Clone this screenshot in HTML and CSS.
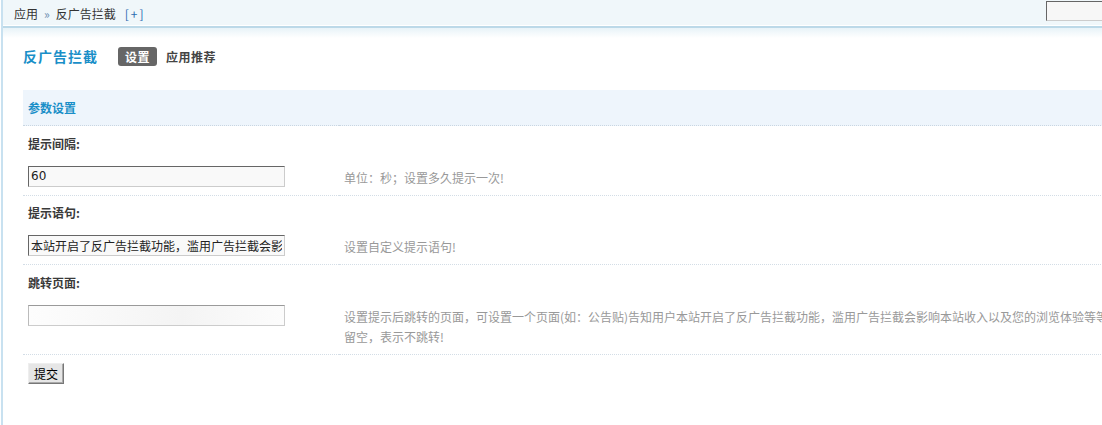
FILE: index.html
```html
<!DOCTYPE html>
<html lang="zh-CN">
<head>
<meta charset="utf-8">
<title>反广告拦截</title>
<link rel="stylesheet" href="styles.css">
</head>
<body>
<div class="frame">
  <div class="topbar">
    <div class="crumb">
      <span>应用</span><span class="sep">»</span><span>反广告拦截</span><a class="plus" href="#">[+]</a>
    </div>
    <input class="search" type="text">
  </div>
  <div class="shade"></div>
  <div class="content">
    <div class="titlebar">
      <h1 class="title">反广告拦截</h1>
      <span class="tab tab-on">设置</span>
      <span class="tab">应用推荐</span>
    </div>
    <table class="tb">
      <tr class="head"><th colspan="2">参数设置</th></tr>
      <tr class="lbl"><td colspan="2">提示间隔:</td></tr>
      <tr class="val">
        <td class="c1"><input class="txt" type="text" value="60"></td>
        <td class="tip">单位：秒；设置多久提示一次!</td>
      </tr>
      <tr class="lbl"><td colspan="2">提示语句:</td></tr>
      <tr class="val">
        <td class="c1"><input class="txt" type="text" value="本站开启了反广告拦截功能，滥用广告拦截会影响本站收入以及您的浏览体验"></td>
        <td class="tip">设置自定义提示语句!</td>
      </tr>
      <tr class="lbl"><td colspan="2">跳转页面:</td></tr>
      <tr class="val">
        <td class="c1"><input class="txt blank" type="text" value=""></td>
        <td class="tip">设置提示后跳转的页面，可设置一个页面(如：公告贴)告知用户本站开启了反广告拦截功能，滥用广告拦截会影响本站收入以及您的浏览体验等等，<br>留空，表示不跳转!</td>
      </tr>
    </table>
    <div class="actions"><button class="btn" type="button">提交</button></div>
  </div>
</div>
</body>
</html>
```
FILE: styles.css
```css
html, body {
  margin: 0;
  padding: 0;
  overflow: hidden;
  background: #fff;
}
body {
  font-family: "Noto Sans CJK SC", "DejaVu Sans", sans-serif;
  font-size: 12px;
  color: #333;
}
.frame {
  margin-left: 1px;
  border-left: 2px solid #c8e1f0;
  height: 425px;
  overflow: hidden;
}
.topbar {
  display: flex;
  align-items: flex-start;
  height: 25px;
  background: #f0f7fa;
  border-bottom: 1px solid #ffffff;
  overflow: hidden;
}
.crumb {
  flex: 1;
  padding-left: 11px;
  line-height: 28px;
  height: 25px;
  color: #333;
  white-space: nowrap;
}
.crumb .sep {
  color: #6f8fb0;
  font-size: 12px;
  margin: 0 6px 0 6px;
}
.crumb .plus {
  color: #2b6bb0;
  text-decoration: none;
  margin-left: 9px;
  letter-spacing: 2px;
}
.search {
  flex: none;
  width: 120px;
  height: 20px;
  margin: 1px -64px 0 0;
  padding: 0;
  box-sizing: border-box;
  background: #f7f7f7;
  border: 1px solid #ccc;
  border-top-color: #666;
  border-left-color: #666;
}
.shade {
  height: 10px;
  border-top: 2px solid #bcd9e8;
  background: linear-gradient(#e8f3f8, #ffffff);
}
.content {
  padding: 9px 0 0 20px;
}
.titlebar {
  display: flex;
  align-items: center;
  height: 19px;
}
.title {
  margin: 0 20px 0 0;
  font-size: 14px;
  letter-spacing: 1px;
  font-weight: bold;
  color: #1a8fc8;
  line-height: 19px;
}
.tab {
  font-weight: bold;
  color: #444;
  line-height: 19px;
  padding: 0 4px;
  letter-spacing: 0.5px;
}
.tab-on {
  background: #666;
  color: #fff;
  border-radius: 3px;
  padding: 0 7px;
  margin-right: 5px;
}
.tb {
  margin-top: 24px;
  width: 1200px;
  border-collapse: collapse;
}
.tb td, .tb th {
  padding: 0 5px;
  text-align: left;
}
.head th {
  height: 35px;
  background: #eef5fc;
  border-bottom: 1px dotted #c9d6e2;
  color: #1a8fc8;
  font-weight: bold;
  font-size: 12px;
  padding-top: 0;
}
.lbl td {
  height: 32px;
  padding-top: 3px;
  box-sizing: border-box;
  font-weight: bold;
  color: #3a3a3a;
  vertical-align: middle;
}
.val td {
  vertical-align: top;
  padding-top: 8px;
  padding-bottom: 7px;
  border-bottom: 1px dotted #d3dde6;
}
.val .c1 {
  width: 306px;
}
.txt {
  display: block;
  width: 257px;
  height: 21px;
  margin: 0;
  padding: 0 2px;
  box-sizing: border-box;
  font-family: "DejaVu Sans", "Noto Sans CJK SC", sans-serif;
  font-size: 12px;
  color: #222;
  background: #f9f9f9;
  border: 1px solid #ccc;
  border-top-color: #666;
  border-left-color: #666;
  outline: none;
}
.txt.blank {
  background: linear-gradient(90deg, #fdfdfd, #f4f4f4 60%, #fcfcfc);
  border-top-color: #9a9a9a;
  border-left-color: #bbb;
}
.tip {
  color: #999;
  line-height: 20px;
  padding-top: 10px !important;
  white-space: nowrap;
}
.actions {
  padding: 8px 0 0 5px;
}
.btn {
  width: 36px;
  height: 21px;
  padding: 0;
  font-family: "Noto Sans CJK SC", sans-serif;
  font-size: 12px;
  color: #000;
  background: #e6e6e6;
  border: 1px solid #777;
  border-top-color: #eee;
  border-left-color: #eee;
  box-shadow: inset -1px -1px 0 #aaa;
}
```
